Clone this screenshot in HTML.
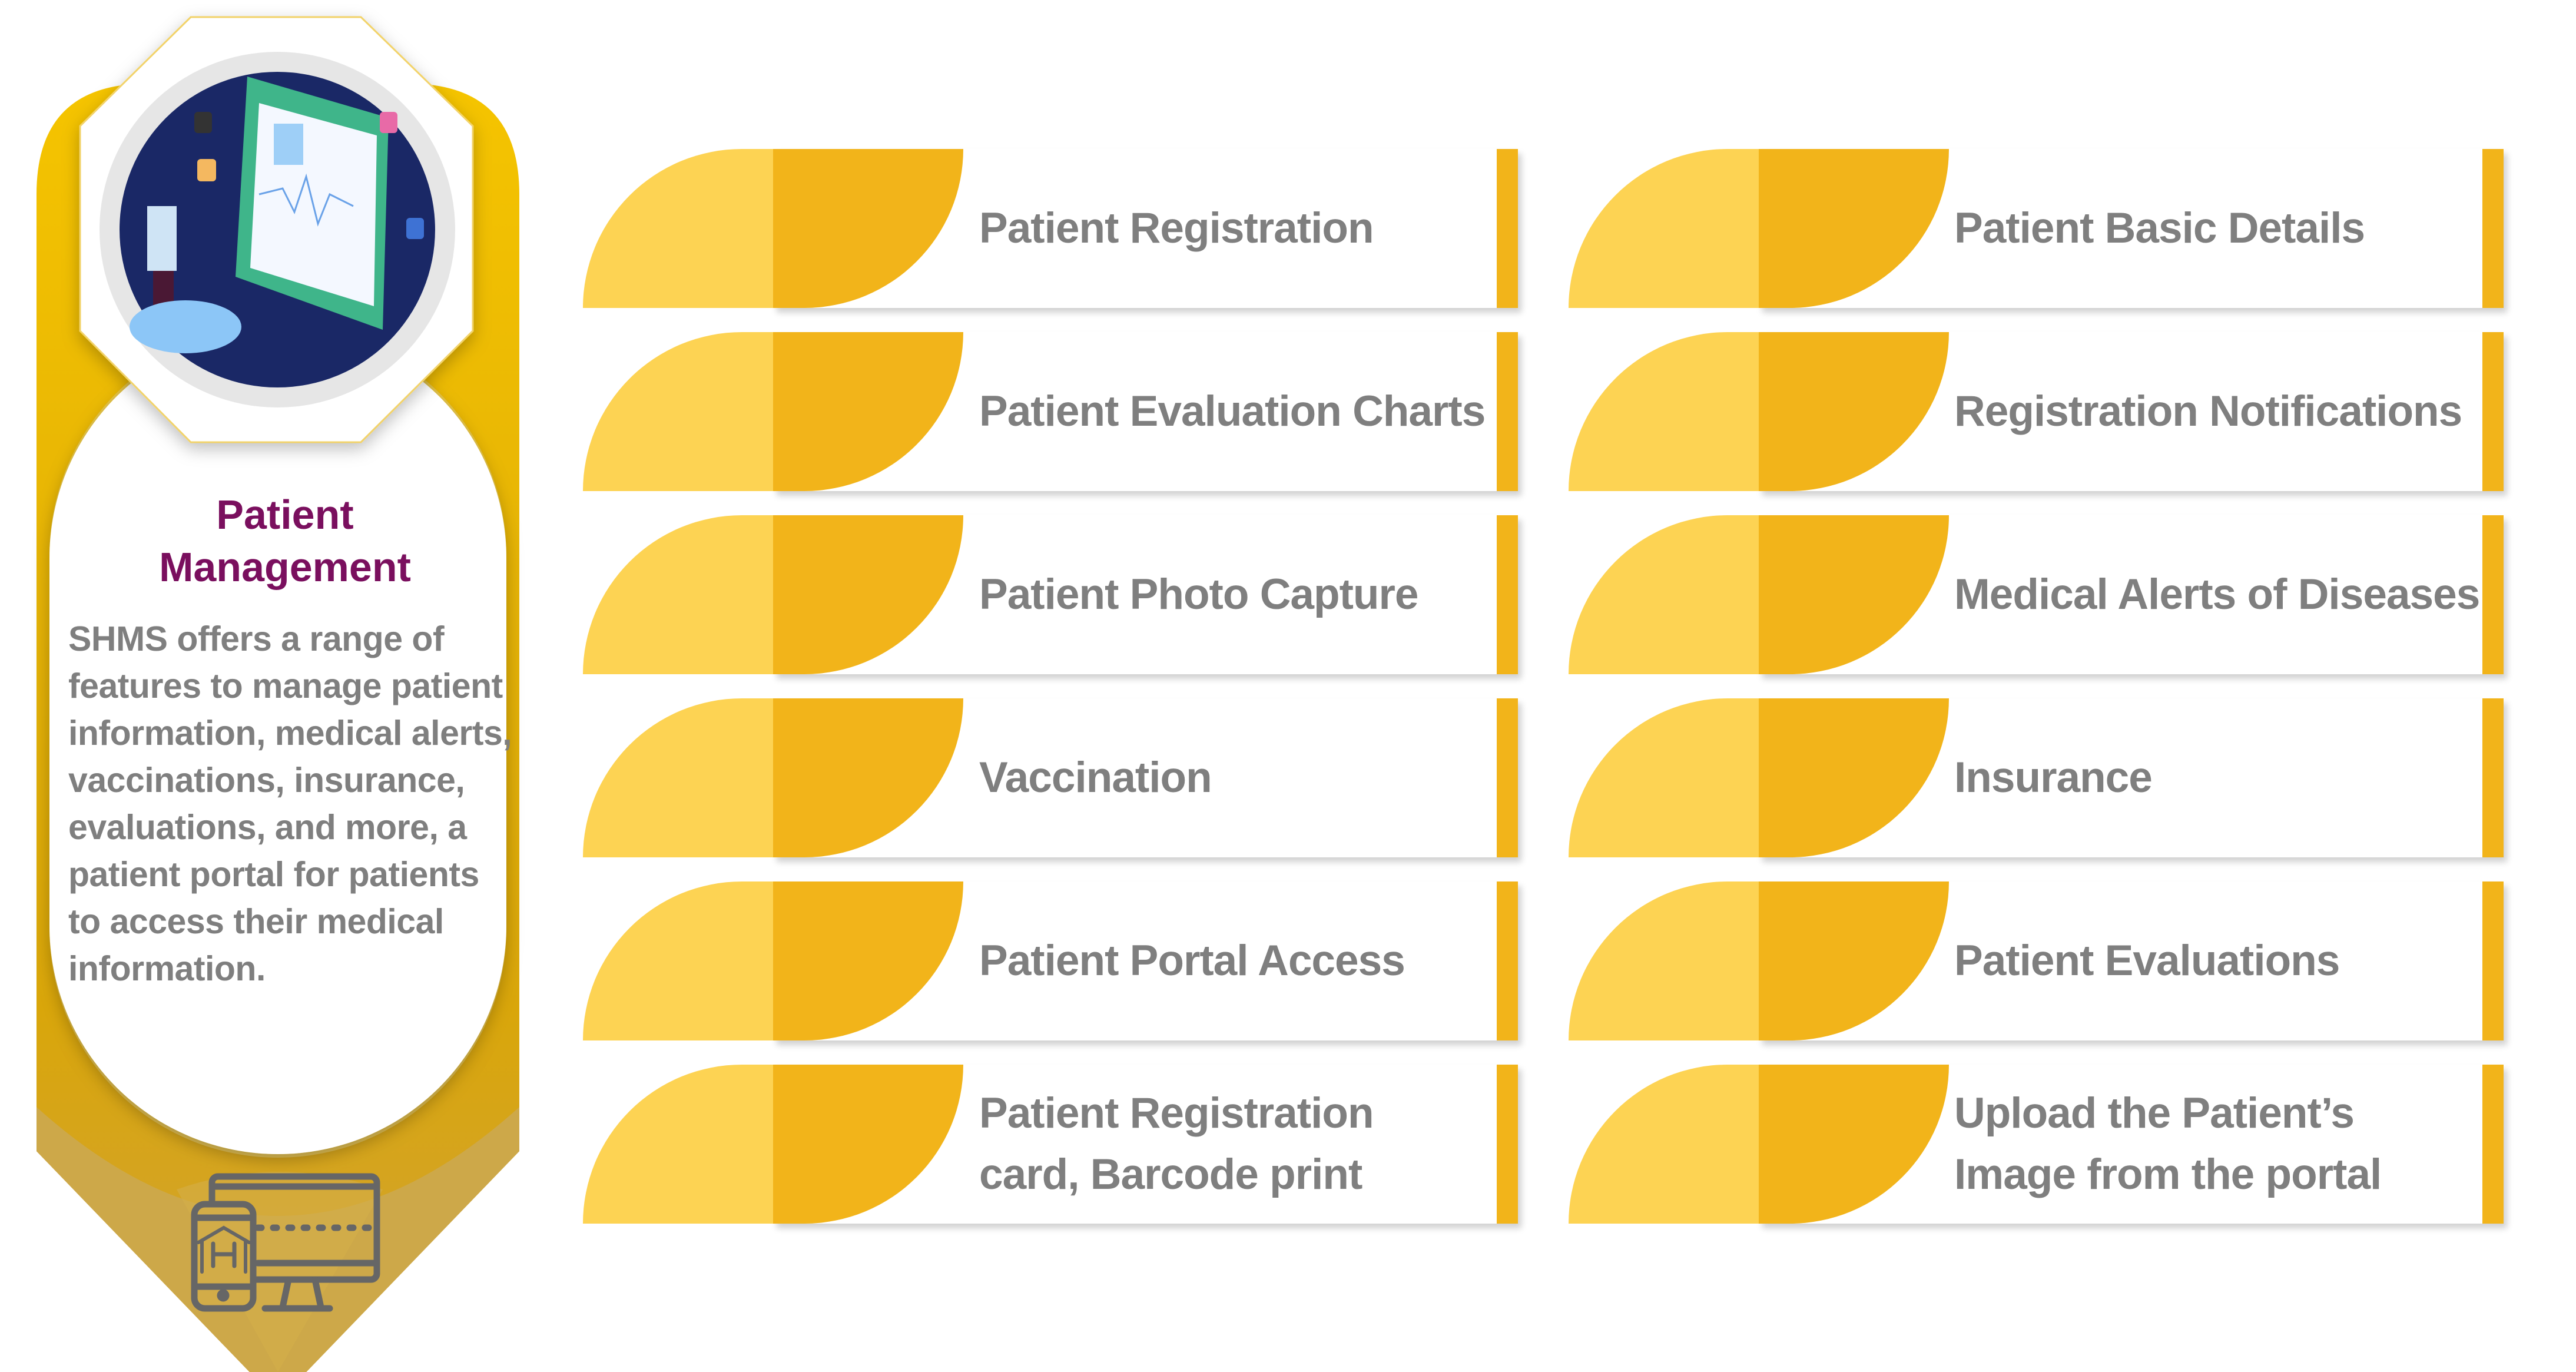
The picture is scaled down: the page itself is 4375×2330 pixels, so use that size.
<!DOCTYPE html>
<html><head><meta charset="utf-8"><style>
html,body{margin:0;padding:0;background:#fff;}
body{width:4375px;height:2330px;position:relative;overflow:hidden;font-family:"Liberation Sans",sans-serif;}
.card{position:absolute;width:1588px;height:270px;}
.card .w{position:absolute;left:323px;top:0;right:0;bottom:0;background:#fff;box-shadow:6px 8px 10px rgba(0,0,0,0.18);}
.card .bar{position:absolute;right:0;top:0;width:36px;height:100%;background:#f2b41a;}
.card .leaf{position:absolute;left:0;top:0;width:646px;height:270px;border-top-left-radius:270px 270px;border-bottom-right-radius:270px 270px;background:linear-gradient(to right,#fdd353 0,#fdd353 323px,#f2b41a 323px);}
.card .t{position:absolute;left:673px;top:0;height:270px;display:flex;align-items:center;font-weight:bold;color:#7f7f7f;font-size:73px;line-height:104px;letter-spacing:-1px;white-space:nowrap;}
.c2 .t{left:655px;}
</style></head><body>
<svg width="950" height="2330" style="position:absolute;left:0;top:0">
<defs>
<linearGradient id="g2" x1="0" y1="0" x2="0" y2="1"><stop offset="0" stop-color="#f5c400"/><stop offset="0.7" stop-color="#d9a60a"/><stop offset="1" stop-color="#cfa23a"/></linearGradient>
<filter id="sh"><feDropShadow dx="0" dy="10" stdDeviation="14" flood-opacity="0.25"/></filter>
</defs>
<path d="M62 330 Q62 142 250 142 L694 142 Q882 142 882 330 L882 1955 L472 2380 L62 1955 Z" fill="url(#g2)"/>
<path d="M62 1955 L472 2380 L882 1955 L882 1880 Q472 2250 62 1880 Z" fill="#cda849"/>
<path d="M300 2020 Q472 1960 650 2020 L472 2330 Z" fill="#d4af4a" opacity="0.6"/>
<rect x="84" y="554" width="776" height="1412" rx="388" fill="#e9d27a" opacity="0.6"/>
<rect x="84" y="560" width="776" height="1400" rx="388" fill="#fff" filter="url(#sh)"/>
<polygon points="324,29 613,29 803,214 803,562 613,751 324,751 136,562 136,214" fill="#fff" stroke="#f2d36a" stroke-width="3" filter="url(#sh)"/>
<circle cx="471" cy="390" r="302" fill="#e6e6e6"/>
<circle cx="471" cy="390" r="268" fill="#1a2866"/>
<polygon points="420,130 660,200 650,560 400,470" fill="#3fb58a"/>
<polygon points="440,175 640,230 635,520 425,455" fill="#f4f8ff"/>
<rect x="465" y="210" width="50" height="70" fill="#9ecff7"/>
<polyline points="440,330 480,320 500,360 520,300 540,380 560,330 600,350" fill="none" stroke="#6aa2e8" stroke-width="3"/>
<rect x="250" y="350" width="50" height="110" fill="#cfe4f5"/>
<rect x="260" y="460" width="35" height="110" fill="#4a1834"/>
<ellipse cx="315" cy="555" rx="95" ry="45" fill="#8cc6f7"/>
<rect x="335" y="270" width="32" height="38" rx="6" fill="#f4b860"/>
<rect x="330" y="190" width="30" height="36" rx="6" fill="#333"/>
<rect x="645" y="190" width="30" height="36" rx="6" fill="#e86aa7"/>
<rect x="690" y="370" width="30" height="36" rx="6" fill="#3e72d4"/>
<g fill="none" stroke="#666" stroke-width="11" stroke-linecap="round">
<rect x="360" y="1998" width="280" height="175" rx="10"/>
<line x1="360" y1="2015" x2="640" y2="2015"/>
<line x1="438" y1="2085" x2="640" y2="2085" stroke-dasharray="6 20"/>
<line x1="438" y1="2145" x2="640" y2="2145"/>
<line x1="490" y1="2173" x2="480" y2="2220"/><line x1="535" y1="2173" x2="545" y2="2220"/>
<line x1="450" y1="2222" x2="560" y2="2222"/>
<rect x="330" y="2045" width="100" height="177" rx="18" fill="#d2ac48"/>
<line x1="330" y1="2068" x2="430" y2="2068"/><line x1="330" y1="2185" x2="430" y2="2185"/>
<polyline points="337,2110 380,2085 423,2110" stroke-width="6"/>
<line x1="343" y1="2108" x2="343" y2="2160" stroke-width="6"/><line x1="417" y1="2108" x2="417" y2="2160" stroke-width="6"/>
<path d="M362 2112 V2150 M398 2112 V2150 M362 2130 H398" stroke-width="7"/>
<circle cx="379" cy="2200" r="5" fill="#666"/>
</g>
</svg>
<div style="position:absolute;left:96px;width:776px;top:830px;text-align:center;color:#7a0f5e;font-weight:bold;font-size:70px;line-height:89px;">Patient<br>Management</div>
<div style="position:absolute;left:116px;top:1045px;width:800px;color:#7f7f7f;font-weight:bold;font-size:59px;line-height:80px;letter-spacing:-0.5px;white-space:nowrap;">SHMS offers a range of<br>features to manage patient<br>information, medical alerts,<br>vaccinations, insurance,<br>evaluations, and more, a<br>patient portal for patients<br>to access their medical<br>information.</div>

<div class="card" style="left:990px;top:253px"><div class="w"><div class="bar"></div></div><div class="leaf"></div><div class="t">Patient Registration</div></div>
<div class="card" style="left:990px;top:564px"><div class="w"><div class="bar"></div></div><div class="leaf"></div><div class="t">Patient Evaluation Charts</div></div>
<div class="card" style="left:990px;top:875px"><div class="w"><div class="bar"></div></div><div class="leaf"></div><div class="t">Patient Photo Capture</div></div>
<div class="card" style="left:990px;top:1186px"><div class="w"><div class="bar"></div></div><div class="leaf"></div><div class="t">Vaccination</div></div>
<div class="card" style="left:990px;top:1497px"><div class="w"><div class="bar"></div></div><div class="leaf"></div><div class="t">Patient Portal Access</div></div>
<div class="card" style="left:990px;top:1808px"><div class="w"><div class="bar"></div></div><div class="leaf"></div><div class="t">Patient Registration<br>card, Barcode print</div></div>

<div class="card c2" style="left:2664px;top:253px"><div class="w"><div class="bar"></div></div><div class="leaf"></div><div class="t">Patient Basic Details</div></div>
<div class="card c2" style="left:2664px;top:564px"><div class="w"><div class="bar"></div></div><div class="leaf"></div><div class="t">Registration Notifications</div></div>
<div class="card c2" style="left:2664px;top:875px"><div class="w"><div class="bar"></div></div><div class="leaf"></div><div class="t">Medical Alerts of Diseases</div></div>
<div class="card c2" style="left:2664px;top:1186px"><div class="w"><div class="bar"></div></div><div class="leaf"></div><div class="t">Insurance</div></div>
<div class="card c2" style="left:2664px;top:1497px"><div class="w"><div class="bar"></div></div><div class="leaf"></div><div class="t">Patient Evaluations</div></div>
<div class="card c2" style="left:2664px;top:1808px"><div class="w"><div class="bar"></div></div><div class="leaf"></div><div class="t">Upload the Patient’s<br>Image from the portal</div></div>
</body></html>
